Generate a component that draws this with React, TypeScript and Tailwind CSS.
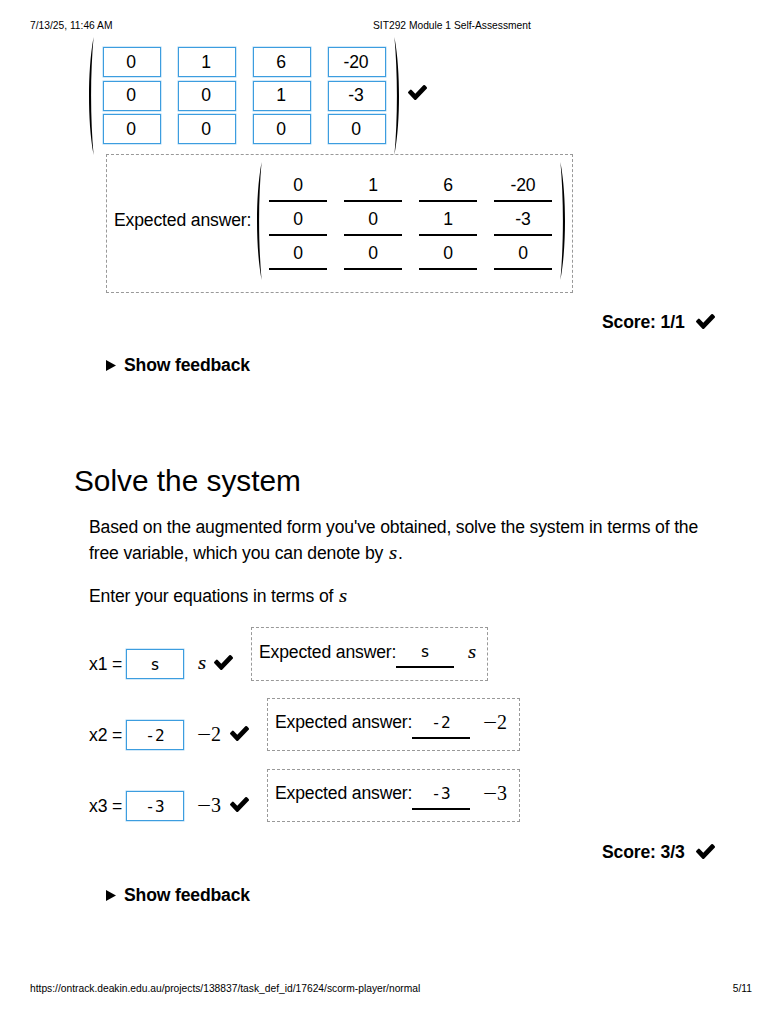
import React from 'react';

const Check = () => (
  <svg viewBox="121 334 1550 1188" className="h-[15px] w-[19px] shrink-0" preserveAspectRatio="none">
    <path d="M1671 566q0 40-28 68l-724 724-136 136q-28 28-68 28t-68-28l-136-136-362-362q-28-28-28-68t28-68l136-136q28-28 68-28t68 28l294 295 656-657q28-28 68-28t68 28l136 136q28 28 28 68z" />
  </svg>
);

const Paren = ({ flip = false }: { flip?: boolean }) => (
  <svg viewBox="0 0 5 118" className={flip ? 'h-[118px] w-[5px] shrink-0 -scale-x-100' : 'h-[118px] w-[5px] shrink-0'}>
    <path d="M4.6 0C1.2 18 0 40 0 59s1.2 41 4.6 59C3 100 2.1 80 2.1 59S3 18 4.6 0z" />
  </svg>
);

const MATRIX = [
  ['0', '1', '6', '-20'],
  ['0', '0', '1', '-3'],
  ['0', '0', '0', '0'],
];

const MathS = () => (
  <span className="ml-px inline-block w-[9px] origin-left scale-x-[1.1] font-['Liberation_Serif'] text-[19px] leading-none italic tracking-normal [-webkit-text-stroke:0.15px_black]">
    s
  </span>
);

const MathValue = ({ value }: { value: string }) =>
  value === 's' ? (
    <MathS />
  ) : (
    <span className="flex items-center font-['Liberation_Serif'] text-[20px] leading-none tracking-normal">
      <span className="inline-block w-[14px] origin-left scale-x-125">−</span>
      {value.slice(1)}
    </span>
  );

const Feedback = () => (
  <div className="flex h-[20px] items-center pl-[106px] font-bold">
    <svg viewBox="0 0 10 11" className="mr-[8px] h-[11px] w-[10px]">
      <path d="M0 0L10 5.5L0 11z" />
    </svg>
    Show feedback
  </div>
);

const Score = ({ text }: { text: string }) => (
  <div className="flex h-[20px] items-center pl-[602px] font-bold">
    <span className="w-[94px]">{text}</span>
    <span className="mb-[2px]">
      <Check />
    </span>
  </div>
);

const Equation = ({ name, value }: { name: string; value: string }) => (
  <div className="flex h-[71px] items-start pl-[89px]">
    <span className="mt-[27px] w-[37px] leading-[20px] whitespace-nowrap">{name} =</span>
    <span className="mt-[22px] flex h-[30px] w-[58px] items-center justify-center border border-[#3c9ddf] pt-px font-['DejaVu_Sans_Mono'] text-[16px] tracking-normal shadow-[0_0_0_0.5px_#a5d3f3]">
      {value}
    </span>
    <span className={value === 's' ? 'mt-[26px] ml-[13px] flex w-[17px]' : 'mt-[26px] ml-[13px] flex w-[33px]'}>
      <MathValue value={value} />
    </span>
    <span className="mt-[28px] w-[37px]">
      <Check />
    </span>
    <span
      className={
        value === 's'
          ? 'flex h-[54px] w-[237px] border border-dashed border-[#999] pl-[7px]'
          : 'flex h-[53px] w-[253px] border border-dashed border-[#999] pl-[7px]'
      }
    >
      <span className={value === 's' ? 'mt-[14px] w-[137px] leading-[20px] whitespace-nowrap' : 'mt-[13px] w-[137px] leading-[20px] whitespace-nowrap'}>
        Expected answer:
      </span>
      <span className="mt-[9px] flex h-[31px] w-[58px] items-center justify-center border-b-2 border-black font-['DejaVu_Sans_Mono'] text-[16px] tracking-normal">
        {value}
      </span>
      <span className={value === 's' ? 'mt-[11px] ml-[13px]' : 'mt-[13px] ml-[13px]'}>
        <MathValue value={value} />
      </span>
    </span>
  </div>
);

export default function App() {
  return (
    <div className="flex h-[1011px] w-[781px] flex-col overflow-hidden bg-white font-['Liberation_Sans',sans-serif] text-[17.6px] tracking-[-0.16px] text-black">
      <header className="flex h-[37px] pt-[20px] pl-[30px] text-[10.25px] leading-[12px] tracking-normal">
        <span className="w-[343px]">7/13/25, 11:46 AM</span>
        <span>SIT292 Module 1 Self-Assessment</span>
      </header>

      <div className="flex h-[117px] items-start pl-[89px]">
        <Paren />
        <div className="mt-[10px] ml-[8.5px] grid grid-cols-[repeat(4,58px)] gap-x-[17px] gap-y-[3.6px]">
          {MATRIX.flat().map((v, i) => (
            <span key={i} className="flex h-[30px] items-center justify-center border border-[#3c9ddf] pr-px shadow-[0_0_0_0.5px_#a5d3f3]">
              {v}
            </span>
          ))}
        </div>
        <div className="ml-[8.5px]">
          <Paren flip />
        </div>
        <div className="mt-[48px] ml-[9px]">
          <Check />
        </div>
      </div>

      <div className="ml-[106px] flex h-[139px] w-[467px] items-start border border-dashed border-[#999] pl-[7px]">
        <span className="mt-[55px] w-[143px] leading-[20px] whitespace-nowrap">Expected answer:</span>
        <div className="mt-[7px]">
          <Paren />
        </div>
        <div className="mt-[16px] ml-[7px] grid grid-cols-[repeat(4,58px)] gap-x-[17px] gap-y-[3px]">
          {MATRIX.flat().map((v, i) => (
            <span key={i} className="flex h-[31px] items-center justify-center border-b-2 border-black">
              {v}
            </span>
          ))}
        </div>
        <div className="mt-[7px] ml-[8px]">
          <Paren flip />
        </div>
      </div>

      <div className="mt-[19px]">
        <Score text="Score: 1/1" />
      </div>
      <div className="mt-[23px]">
        <Feedback />
      </div>

      <h1 className="mt-[86px] ml-[74px] text-[29.8px] leading-[40px] tracking-normal">Solve the system</h1>
      <p className="mt-[13px] ml-[89px] w-[640px] leading-[26px]">
        Based on the augmented form you've obtained, solve the system in terms of the
        <br />
        free variable, which you can denote by <MathS />.
      </p>
      <p className="mt-[17px] ml-[89px] leading-[26px]">
        Enter your equations in terms of <MathS />
      </p>

      <div className="mt-[18px]">
        <Equation name="x1" value="s" />
        <Equation name="x2" value="-2" />
        <Equation name="x3" value="-3" />
      </div>

      <div className="mt-[2px]">
        <Score text="Score: 3/3" />
      </div>
      <div className="mt-[23px]">
        <Feedback />
      </div>

      <footer className="mt-auto flex h-[28px] justify-between pr-[29px] pl-[30px] text-[10.25px] leading-[12px] tracking-normal">
        <span>https://ontrack.deakin.edu.au/projects/138837/task_def_id/17624/scorm-player/normal</span>
        <span>5/11</span>
      </footer>
    </div>
  );
}
